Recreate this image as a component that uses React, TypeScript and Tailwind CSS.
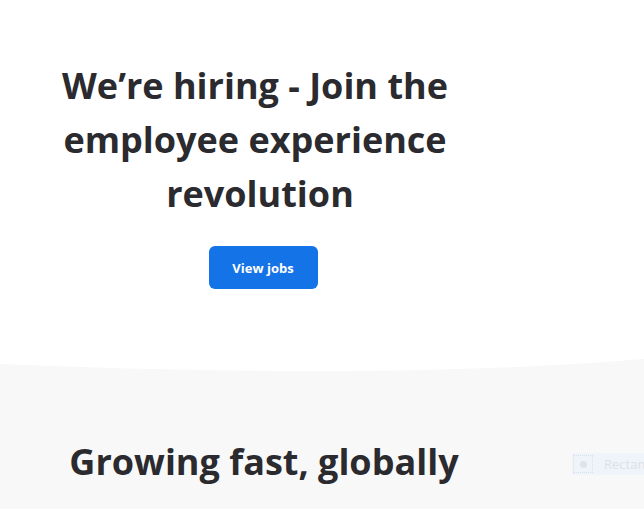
import React from "react";

export default function App() {
  return (
    <div
      className="w-[644px] h-[509px] overflow-hidden bg-white"
      style={{ fontFamily: '"Open Sans", "Liberation Sans", sans-serif' }}
    >
      <section className="relative bg-white h-[358px]">
        <div className="w-[528px] pt-[59px] flex flex-col items-center">
          <h1 className="text-[36px] leading-[54px] font-bold text-[#2a2a2f] text-center pr-[18px]">
            We’re hiring - Join the
            <br />
            employee experience
            <br />
            <span className="inline-block pl-[10px]">revolution</span>
          </h1>
          <button className="mt-[25px] mr-[2px] w-[109px] h-[43px] rounded-[6px] bg-[#1473e6] text-white text-[13px] font-bold leading-[43px] pt-[1px]">
            View jobs
          </button>
        </div>
      </section>
      <svg
        className="block w-[644px] h-[14px]"
        viewBox="0 0 644 14"
        preserveAspectRatio="none"
      >
        <path d="M0 6 Q 160 13 330 13 Q 500 13 644 1 L644 14 L0 14 Z" fill="#f8f8f8" />
      </svg>
      <section className="relative bg-[#f8f8f8] h-[200px]">
        <div className="w-[528px] pt-[63px] flex justify-center">
          <h2 className="text-[36px] leading-[54px] font-bold text-[#2a2a2f] text-center">
            Growing fast, globally
          </h2>
        </div>
        <div className="absolute left-[572px] top-[81px] w-[80px] h-[22px] bg-[#eff4fa] flex items-center overflow-hidden">
          <div className="shrink-0 ml-[1px] w-[20px] h-[18px] border border-dotted border-[#d9e0e8] flex items-center justify-center">
            <div className="w-[7px] h-[7px] rounded-full bg-[#dfe3e8]" />
          </div>
          <span className="shrink-0 ml-[11px] text-[13px] leading-[22px] text-[#dde1e6] whitespace-nowrap">Rectangle</span>
        </div>
      </section>
    </div>
  );
}
